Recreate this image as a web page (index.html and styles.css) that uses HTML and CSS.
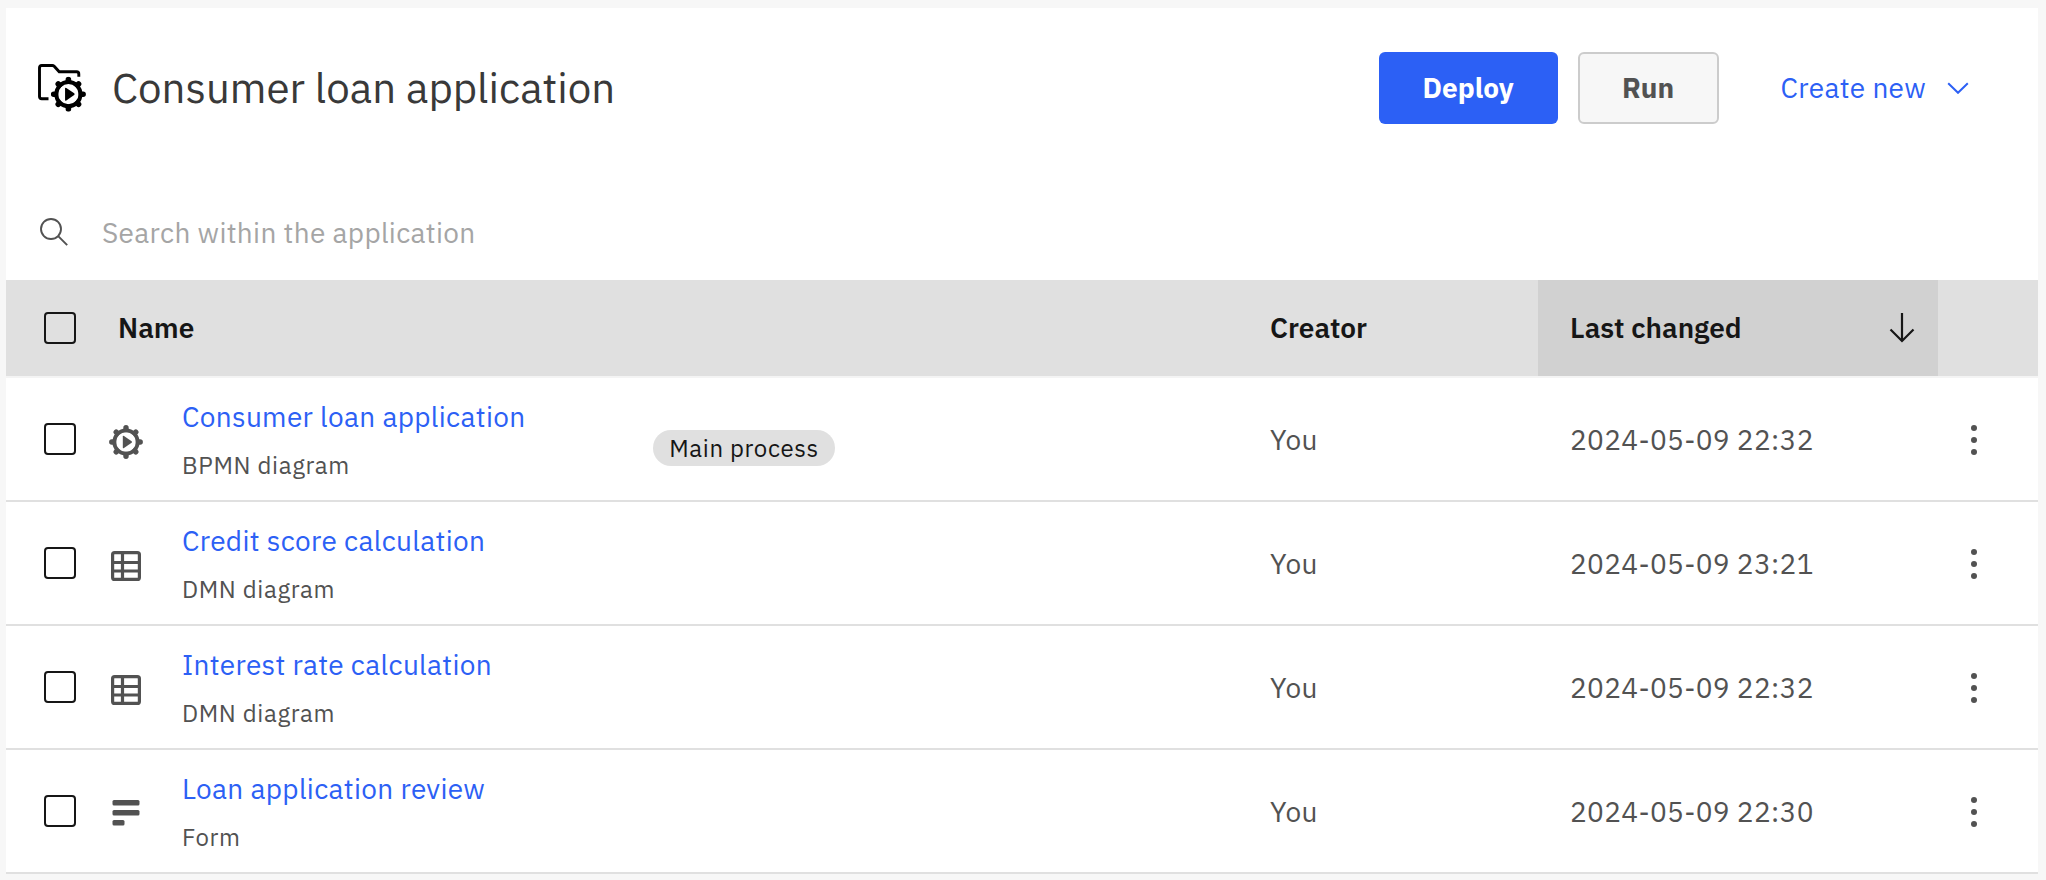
FILE: index.html
```html
<!DOCTYPE html>
<html lang="en">
<head>
<meta charset="utf-8">
<title>Consumer loan application</title>
<link rel="stylesheet" href="styles.css">
</head>
<body>
<svg class="defs" aria-hidden="true">
  <symbol id="gear" viewBox="-17 -17 34 34">
    <circle r="11.7" fill="none" stroke="currentColor" stroke-width="3.8"/>
    <g stroke="currentColor" stroke-width="5.4" stroke-linecap="round">
      <path d="M0-12.5V-14.2M0 12.5V14.2M-12.5 0H-14.2M12.5 0H14.2M-8.8-8.8L-9.8-9.8M8.8-8.8L9.8-9.8M-8.8 8.8L-9.8 9.8M8.8 8.8L9.8 9.8"/>
    </g>
    <path d="M-3.2-5.6Q-3.2-6.8-2-6L5.6-.8Q6.5 0 5.6.8L-2 6Q-3.2 6.8-3.2 5.6Z" fill="currentColor"/>
  </symbol>
  <symbol id="table" viewBox="0 0 30 30">
    <rect x="1.6" y="1.6" width="26.8" height="26.8" rx="2" fill="none" stroke="currentColor" stroke-width="3.2"/>
    <path d="M11.5 2V28M2 11.5H28M2 20H28" fill="none" stroke="currentColor" stroke-width="3.2"/>
  </symbol>
  <symbol id="form" viewBox="0 0 28 26">
    <rect x="0.5" y="0" width="27" height="5.4" rx="1.5" fill="currentColor"/>
    <rect x="0.5" y="10" width="27" height="5.4" rx="1.5" fill="currentColor"/>
    <rect x="0.5" y="20" width="12" height="5.4" rx="1.5" fill="currentColor"/>
  </symbol>
  <symbol id="dots" viewBox="0 0 6 30">
    <circle cx="3" cy="3" r="3"/><circle cx="3" cy="15" r="3"/><circle cx="3" cy="27" r="3"/>
  </symbol>
</svg>
<main class="panel">
  <header class="top">
    <svg class="app-icon" viewBox="0 0 50 50" fill="none">
      <path d="M10.5 34.7H3.7Q1.5 34.7 1.5 32.5V3.7Q1.5 1.5 3.7 1.5H14.2Q15.4 1.5 16.2 2.3L21.2 7.8H38.6Q40.8 7.8 40.8 10V12.8" stroke="#000" stroke-width="2.9"/>
      <use href="#gear" x="12.8" y="12.6" width="35.2" height="35.2" color="#000"/>
    </svg>
    <h1 class="title">Consumer loan application</h1>
    <button class="btn deploy">Deploy</button>
    <button class="btn run">Run</button>
    <button class="create"><span>Create new</span>
      <svg class="chevron" viewBox="0 0 22 12"><path d="M1.2 1.2L11 10.8L20.8 1.2" fill="none" stroke="currentColor" stroke-width="2"/></svg>
    </button>
  </header>
  <div class="search">
    <svg class="search-icon" viewBox="0 0 28 28" fill="none" stroke="#525252" stroke-width="1.9"><circle cx="11" cy="11" r="10"/><path d="M18.2 18.2L27.2 27.2"/></svg>
    <span class="placeholder">Search within the application</span>
  </div>
  <div class="row head">
    <div class="cell pick"><span class="check"></span></div>
    <div class="cell name-head"><span class="caption">Name</span></div>
    <div class="cell creator"><span class="caption">Creator</span></div>
    <div class="cell changed sorted"><span class="caption">Last changed</span>
      <svg class="arrow" viewBox="0 0 26 30"><path d="M13 0V28M1.5 16.5L13 28L24.5 16.5" fill="none" stroke="currentColor" stroke-width="2.2"/></svg>
    </div>
    <div class="cell"></div>
  </div>
  <div class="row">
    <div class="cell pick"><span class="check"></span></div>
    <div class="cell name"><span class="kind"><svg class="i-gear"><use href="#gear"/></svg></span><div class="label"><a class="link">Consumer loan application</a><span class="sub">BPMN diagram</span></div><span class="tag">Main process</span></div>
    <div class="cell creator">You</div>
    <div class="cell changed">2024-05-09 22:32</div>
    <div class="cell more"><svg class="dots"><use href="#dots"/></svg></div>
  </div>
  <div class="row">
    <div class="cell pick"><span class="check"></span></div>
    <div class="cell name"><span class="kind"><svg class="i-table"><use href="#table"/></svg></span><div class="label"><a class="link">Credit score calculation</a><span class="sub">DMN diagram</span></div></div>
    <div class="cell creator">You</div>
    <div class="cell changed">2024-05-09 23:21</div>
    <div class="cell more"><svg class="dots"><use href="#dots"/></svg></div>
  </div>
  <div class="row">
    <div class="cell pick"><span class="check"></span></div>
    <div class="cell name"><span class="kind"><svg class="i-table"><use href="#table"/></svg></span><div class="label"><a class="link">Interest rate calculation</a><span class="sub">DMN diagram</span></div></div>
    <div class="cell creator">You</div>
    <div class="cell changed">2024-05-09 22:32</div>
    <div class="cell more"><svg class="dots"><use href="#dots"/></svg></div>
  </div>
  <div class="row">
    <div class="cell pick"><span class="check"></span></div>
    <div class="cell name"><span class="kind"><svg class="i-form"><use href="#form"/></svg></span><div class="label"><a class="link">Loan application review</a><span class="sub">Form</span></div></div>
    <div class="cell creator">You</div>
    <div class="cell changed">2024-05-09 22:30</div>
    <div class="cell more"><svg class="dots"><use href="#dots"/></svg></div>
  </div>
</main>
</body>
</html>
```
FILE: styles.css
```css
* { box-sizing: border-box; }
body {
  margin: 0;
  padding: 8px 8px 6px 6px;
  height: 880px;
  background: #f7f7f7;
  font-family: "IBM Plex Sans", Roboto, "Liberation Sans", sans-serif;
  font-size: 28px;
  color: #525252;
  overflow: hidden;
}
svg { display: block; flex: none; }
.defs { width: 0; height: 0; float: left; }
.panel { background: #fff; height: 866px; }
.top { display: flex; align-items: center; height: 160px; padding: 0 69px 0 32px; }
.app-icon { width: 50px; height: 50px; margin-top: 2px; }
.title { margin: 0 auto 0 24px; font-size: 42px; font-weight: 400; line-height: 56px; color: #393939; white-space: nowrap; }
.btn { height: 72px; padding: 0; border: 0; border-radius: 6px; font: 700 28px/36px "IBM Plex Sans", Roboto, sans-serif; }
.deploy { width: 179px; margin-right: 20px; background: #2c60f5; color: #fff; }
.run { width: 141px; margin-right: 62px; background: #f7f7f7; border: 2px solid #ccc; color: #525252; }
.create { display: flex; align-items: center; gap: 21px; padding: 0; border: 0; background: none; color: #2c60f5; font: 400 28px/36px "IBM Plex Sans", Roboto, sans-serif; letter-spacing: 0.32px; white-space: nowrap; }
.chevron { width: 22px; height: 12px; }
.search { display: flex; align-items: center; height: 112px; padding: 16px 0 0 34px; gap: 34px; }
.search-icon { width: 28px; height: 28px; }
.placeholder { color: #a5a5a5; letter-spacing: 0.32px; }
.row { display: grid; grid-template-columns: 102px 1131px 299px 400px 100px; height: 124px; border-bottom: 2px solid #e0e0e0; letter-spacing: 0.32px; }
.head { height: 98px; background: #e0e0e0; border-bottom-color: #f4f4f4; color: #161616; font-weight: 600; letter-spacing: 0; }
.caption { margin-top: -2px; }
.cell { display: flex; align-items: center; white-space: nowrap; }
.pick { padding-left: 38px; }
.check { width: 32px; height: 32px; border: 2px solid #161616; border-radius: 4px; }
.name-head { padding-left: 10px; }
.creator { padding-left: 31px; }
.changed { padding-left: 32px; }
.sorted { background: #d1d1d1; justify-content: space-between; padding-right: 23px; }
.arrow { width: 26px; height: 30px; }
.kind { display: flex; justify-content: center; width: 36px; margin: 6px 38px 0 0; }
.i-gear { width: 34px; height: 34px; }
.i-table { width: 30px; height: 30px; }
.i-form { width: 28px; height: 26px; margin-top: -2px; }
.label { display: flex; flex-direction: column; width: 471px; gap: 12px; margin-top: 4px; }
.link { color: #2c60f5; line-height: 36px; }
.sub { font-size: 24px; line-height: 36px; letter-spacing: 0.64px; }
.tag { height: 36px; width: 182px; margin-top: 18px; border-radius: 18px; background: #e0e0e0; color: #161616; font-size: 24px; line-height: 36px; text-align: center; letter-spacing: 0.64px; }
.more { padding-left: 33px; }
.dots { width: 6px; height: 30px; margin-top: 2px; fill: #525252; }
```
